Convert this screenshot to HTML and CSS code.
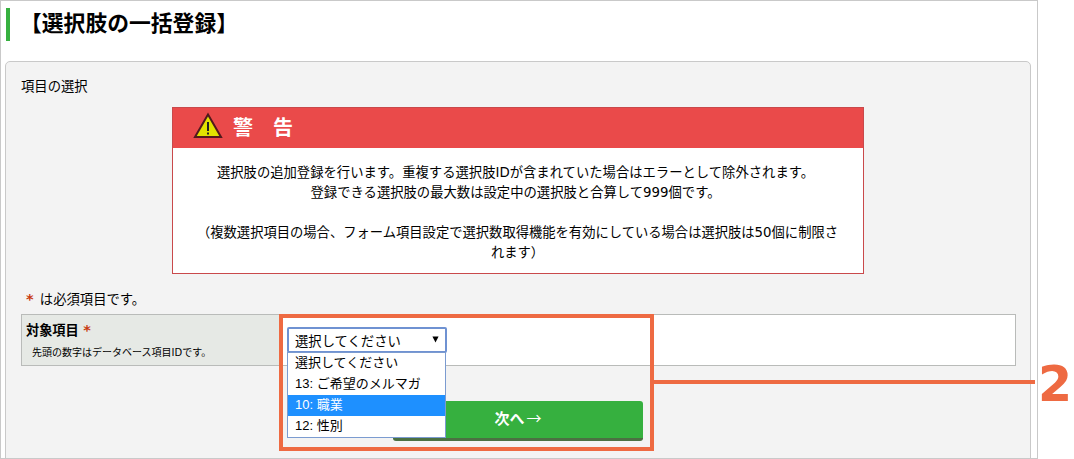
FILE: index.html
```html
<!DOCTYPE html>
<html lang="ja">
<head>
  <meta charset="UTF-8">
  <title>選択肢の一括登録</title>
  <link rel="stylesheet" href="styles.css">
</head>
<body>
  <div class="page">
    <h1 class="title">【選択肢の一括登録】</h1>
    <div class="panel">
      <p class="lead">項目の選択</p>
      <div class="warning">
        <div class="warning-head">
          <svg class="warning-icon" width="30" height="27" viewBox="0 0 30 27">
            <path d="M15 2.5 L28 25 H2 Z" fill="#e2e200" stroke="#521a1c" stroke-width="2"/>
            <path d="M15 10 V19 M15 20.5 V22.5" stroke="#222" stroke-width="2"/>
          </svg>
          <span>警　告</span>
        </div>
        <div class="warning-body">
          <p>選択肢の追加登録を行います。重複する選択肢IDが含まれていた場合はエラーとして除外されます。<br>
          登録できる選択肢の最大数は設定中の選択肢と合算して999個です。</p>
          <p class="limit">（複数選択項目の場合、フォーム項目設定で選択数取得機能を有効にしている場合は選択肢は50個に制限さ<br>れます）</p>
        </div>
      </div>
      <p class="note"><span class="req">*</span> は必須項目です。</p>
      <div class="row">
        <div class="row-label">
          <div class="label">対象項目 <span class="req">*</span></div>
          <div class="hint">先頭の数字はデータベース項目IDです。</div>
        </div>
        <div class="row-field">
          <div class="select">
            <span>選択してください</span>
            <svg width="7" height="7" viewBox="0 0 8 7"><path d="M0.5 0 H7.5 L4 7 Z" fill="#000"/></svg>
            <ul class="options">
              <li>選択してください</li>
              <li>13: ご希望のメルマガ</li>
              <li class="active">10: 職業</li>
              <li>12: 性別</li>
            </ul>
          </div>
        </div>
      </div>
      <div class="next">次へ<span class="arrow">→</span></div>
    </div>
  </div>

  <!-- step marker -->
  <div class="mark-box"></div>
  <div class="mark-line"></div>
  <div class="mark-number">2</div>
</body>
</html>
```

FILE: styles.css
```css
* {
  box-sizing: border-box;
}
body {
  margin: 0;
  position: relative;
  height: 459px;
  overflow: hidden;
  background: #fff;
  color: #000;
  font: 13.33px/20px "DejaVu Sans", "Noto Sans CJK JP", sans-serif;
}
p, ul {
  margin: 0;
  padding: 0;
}
.page {
  width: 1038px;
  height: 459px;
  border: 1px solid #c9c9c9;
  padding: 7px 6px 0 4px;
  overflow: hidden;
}
.title {
  margin: 0 0 20px 1px;
  height: 33px;
  border-left: 4px solid #36b03f;
  padding-left: 10px;
  font-family: "Noto Sans CJK JP", sans-serif;
  font-size: 21.8px;
  line-height: 28px;
  font-weight: bold;
}
.panel {
  height: 410px;
  border: 1px solid #c9c9c9;
  border-radius: 5px;
  background: #f3f3f3;
  padding: 15px 14px 0 15px;
}
.lead {
  height: 20px;
}
.warning {
  width: 692px;
  height: 167px;
  margin: 10px auto 0 151px;
  border: 1px solid #c9494b;
  background: #fff;
}
.warning-head {
  display: flex;
  align-items: center;
  height: 40px;
  padding-left: 20px;
  gap: 10px;
  background: #ea4a4a;
  color: #fff;
  font-size: 20px;
  font-weight: bold;
}
.warning-icon {
  margin-top: -5px;
}
.warning-body {
  padding: 15px 5px 0 0;
  text-align: center;
  white-space: nowrap;
}
.limit {
  margin-top: 20px;
  padding-left: 4px;
  font-size: 13.3px;
}
.note {
  height: 20px;
  margin: 15px 0 5px 5px;
}
.req {
  margin-right: 2px;
  color: #c83a10;
  font-size: 14.5px;
  font-weight: bold;
}
.row {
  display: flex;
  height: 52px;
  border: 1px solid #b9bbb9;
  background: #fff;
}
.row-label {
  width: 259px;
  padding: 5px 5px 0 4px;
  border-right: 1px solid #b9bbb9;
  background: #e6e9e5;
}
.label {
  height: 20px;
  font-size: 13.2px;
  font-weight: bold;
}
.hint {
  padding: 4px 6px;
  font-size: 10px;
  line-height: 18px;
}
.row-field {
  padding: 12px 6px;
}
.select {
  position: relative;
  display: flex;
  justify-content: space-between;
  width: 160px;
  height: 26px;
  border: 2px solid #6f92d2;
  border-radius: 2px;
  background: #fff;
  padding: 2px 6px 0;
  font-family: "Liberation Sans", "Noto Sans CJK JP", sans-serif;
  line-height: 22px;
}
.select svg {
  margin-top: 5px;
}
.options {
  position: absolute;
  top: 23px;
  left: -2px;
  width: 159px;
  height: 86px;
  border: 1px solid #7b9bd0;
  background: #fff;
  list-style: none;
  font-size: 13px;
  line-height: 19px;
}
.options li {
  height: 21px;
  padding-left: 7px;
}
.options .active {
  background: #1e90ff;
  color: #fff;
}
.next {
  width: 250px;
  height: 40px;
  margin: 35px auto 0 372px;
  border-bottom: 3px solid #4b7042;
  border-radius: 3px;
  background: #36b03f;
  color: #fff;
  font-size: 15px;
  font-weight: bold;
  line-height: 34px;
  text-align: center;
}
.arrow {
  margin-left: 2px;
  font-family: "Noto Sans CJK JP", sans-serif;
  font-weight: normal;
}
.mark-box {
  position: absolute;
  left: 279px;
  top: 314px;
  width: 375px;
  height: 137px;
  border: 4px solid #ee6a42;
}
.mark-line {
  position: absolute;
  left: 654px;
  top: 380px;
  width: 381px;
  height: 4px;
  background: #ee6a42;
}
.mark-number {
  position: absolute;
  left: 1038px;
  top: 360px;
  color: #ee6a42;
  font: bold 49px/50px "DejaVu Sans", sans-serif;
}
```
